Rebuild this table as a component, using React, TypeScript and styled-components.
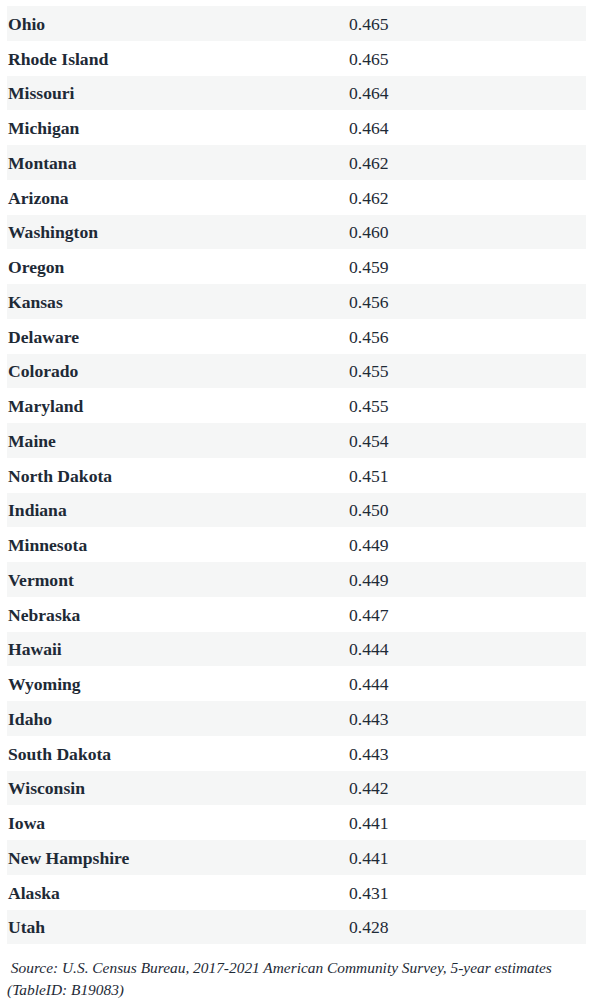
import styled, { createGlobalStyle } from "styled-components";

const GlobalStyle = createGlobalStyle`
  body {
    margin: 0;
    background: #fff;
    color: #1e2a36;
    font-family: "Liberation Serif", "Times New Roman", serif;
  }
`;

const Page = styled.div`
  padding: 6px 3px 0 7px;
`;

const Table = styled.div`
  display: flex;
  flex-direction: column;
`;

const Row = styled.div<{ $shaded: boolean }>`
  display: grid;
  grid-template-columns: 342px 1fr;
  align-items: center;
  height: 34.75px;
  padding-top: 2px;
  box-sizing: border-box;
  background: ${(p) => (p.$shaded ? "#f5f6f6" : "#fff")};
  font-size: 17.6px;
`;

const State = styled.div`
  font-weight: bold;
  padding-left: 1px;
`;

const Value = styled.div``;

const Caption = styled.p`
  margin: 13px 0 0;
  font-style: italic;
  font-size: 15.4px;
  line-height: 22px;
`;

const rows: [string, string][] = [
  ["Ohio", "0.465"],
  ["Rhode Island", "0.465"],
  ["Missouri", "0.464"],
  ["Michigan", "0.464"],
  ["Montana", "0.462"],
  ["Arizona", "0.462"],
  ["Washington", "0.460"],
  ["Oregon", "0.459"],
  ["Kansas", "0.456"],
  ["Delaware", "0.456"],
  ["Colorado", "0.455"],
  ["Maryland", "0.455"],
  ["Maine", "0.454"],
  ["North Dakota", "0.451"],
  ["Indiana", "0.450"],
  ["Minnesota", "0.449"],
  ["Vermont", "0.449"],
  ["Nebraska", "0.447"],
  ["Hawaii", "0.444"],
  ["Wyoming", "0.444"],
  ["Idaho", "0.443"],
  ["South Dakota", "0.443"],
  ["Wisconsin", "0.442"],
  ["Iowa", "0.441"],
  ["New Hampshire", "0.441"],
  ["Alaska", "0.431"],
  ["Utah", "0.428"],
];

export default function App() {
  return (
    <Page>
      <GlobalStyle />
      <Table>
        {rows.map(([state, value], i) => (
          <Row key={state} $shaded={i % 2 === 0}>
            <State>{state}</State>
            <Value>{value}</Value>
          </Row>
        ))}
      </Table>
      <Caption>
        &nbsp;Source: U.S. Census Bureau, 2017-2021 American Community Survey, 5-year estimates
        <br />
        (TableID: B19083)
      </Caption>
    </Page>
  );
}
